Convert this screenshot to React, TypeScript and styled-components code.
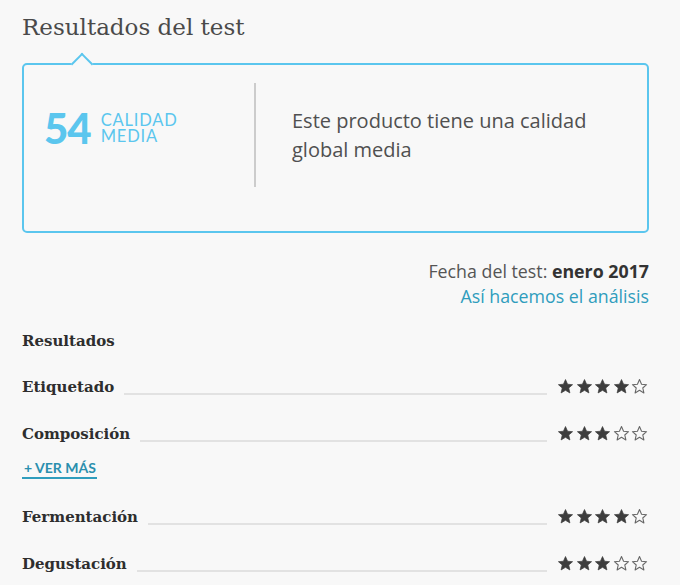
import React from 'react';
import styled, {createGlobalStyle} from 'styled-components';

const GlobalStyle = createGlobalStyle`
  html, body {
    margin: 0;
    padding: 0;
    background: #f8f8f8;
  }
`;

type Rating = {label: string; stars: number; more?: boolean};

const ratings: Rating[] = [
  {label: 'Etiquetado', stars: 4},
  {label: 'Composición', stars: 3, more: true},
  {label: 'Fermentación', stars: 4},
  {label: 'Degustación', stars: 3},
];

const StarIcon: React.FC<{filled: boolean}> = ({filled}) => (
  <svg width="17" height="17" viewBox="0 0 24 24">
    <path
      d="M12 2.2l2.9 6.6 7.1.6-5.4 4.7 1.6 7-6.2-3.7-6.2 3.7 1.6-7L2 9.4l7.1-.6z"
      fill={filled ? '#3d3d3d' : 'none'}
      stroke={filled ? '#3d3d3d' : '#666'}
      strokeWidth={filled ? 1 : 1.5}
      strokeLinejoin="round"
    />
  </svg>
);

const App: React.FC = () => {
  return (
    <>
      <GlobalStyle />
      <Page>
        <Title>Resultados del test</Title>
        <ScoreBox>
          <ScoreCol>
            <Score>54</Score>
            <ScoreLabel>
              <span>CALIDAD</span>
              <span>MEDIA</span>
            </ScoreLabel>
          </ScoreCol>
          <Divider />
          <Summary>Este producto tiene una calidad global media</Summary>
        </ScoreBox>

        <Meta>
          <MetaLine>
            Fecha del test: <strong>enero 2017</strong>
          </MetaLine>
          <MetaLink href="#">Así hacemos el análisis</MetaLink>
        </Meta>

        <SectionTitle>Resultados</SectionTitle>
        {ratings.map(r => (
          <React.Fragment key={r.label}>
            <Row>
              <RowLabel>{r.label}</RowLabel>
              <Leader />
              <Stars>
                {[0, 1, 2, 3, 4].map(i => (
                  <StarIcon key={i} filled={i < r.stars} />
                ))}
              </Stars>
            </Row>
            {r.more && <MoreLink href="#">+ VER MÁS</MoreLink>}
          </React.Fragment>
        ))}
      </Page>
    </>
  );
};

export default App;

const Page = styled.div`
  width: 627px;
  padding: 12px 0 0 22px;
  font-family: Lato, 'Open Sans', sans-serif;
  color: #444;
`;

const Title = styled.h2`
  margin: 0;
  font-family: 'DejaVu Serif', serif;
  font-weight: normal;
  font-size: 23px;
  line-height: 30px;
  color: #4a4a4a;
`;

const ScoreBox = styled.div`
  position: relative;
  margin-top: 21px;
  height: 148px;
  border: 2px solid #5bc6ee;
  border-radius: 5px;
  display: flex;
  align-items: flex-start;
  padding: 18px 0 0 20px;

  &::before {
    content: '';
    position: absolute;
    top: -9px;
    left: 50px;
    width: 14px;
    height: 14px;
    background: #f8f8f8;
    border-top: 2px solid #5bc6ee;
    border-left: 2px solid #5bc6ee;
    transform: rotate(45deg);
  }
`;

const ScoreCol = styled.div`
  width: 210px;
  height: 90px;
  padding-bottom: 14px;
  display: flex;
  align-items: center;
  gap: 10px;
`;

const Score = styled.div`
  font-family: Lato, sans-serif;
  font-weight: 900;
  font-size: 42px;
  line-height: 1;
  color: #5bc6ee;
  letter-spacing: -1px;
`;

const ScoreLabel = styled.div`
  display: flex;
  flex-direction: column;
  font-family: Lato, sans-serif;
  font-size: 16.5px;
  line-height: 16.5px;
  letter-spacing: 0.8px;
  color: #5bc6ee;
`;

const Divider = styled.div`
  width: 2px;
  height: 104px;
  background: #cccccc;
`;

const Summary = styled.p`
  margin: 0 0 0 36px;
  width: 320px;
  height: 104px;
  display: flex;
  align-items: center;
  font-family: 'Open Sans', sans-serif;
  font-size: 20px;
  line-height: 29px;
  color: #505050;
`;

const Meta = styled.div`
  margin-top: 26px;
  text-align: right;
  font-family: 'Open Sans', sans-serif;
  font-size: 17.8px;
  line-height: 25px;
`;

const MetaLine = styled.div`
  color: #555;

  strong {
    color: #333;
  }
`;

const MetaLink = styled.a`
  color: #2f9dbd;
  text-decoration: none;
`;

const SectionTitle = styled.h3`
  margin: 20px 0 10px;
  font-family: 'DejaVu Serif', serif;
  font-weight: bold;
  font-size: 15px;
  line-height: 24px;
  color: #2e2e2e;
`;

const Row = styled.div`
  display: flex;
  align-items: center;
  height: 47px;
`;

const RowLabel = styled.span`
  font-family: 'DejaVu Serif', serif;
  font-weight: bold;
  font-size: 15px;
  color: #2e2e2e;
`;

const Leader = styled.div`
  flex: 1;
  height: 2px;
  margin: 15px 10px 0;
  background: #e2e2e2;
`;

const Stars = styled.div`
  display: flex;
  gap: 1.5px;
  width: 92px;
`;

const MoreLink = styled.a`
  display: inline-block;
  margin: 1px 0 14px;
  font-family: Lato, sans-serif;
  font-weight: bold;
  font-size: 14px;
  color: #2a8fae;
  text-decoration: none;
  padding: 0 1px 1px 2px;
  border-bottom: 2px solid #2f9dbd;
`;
